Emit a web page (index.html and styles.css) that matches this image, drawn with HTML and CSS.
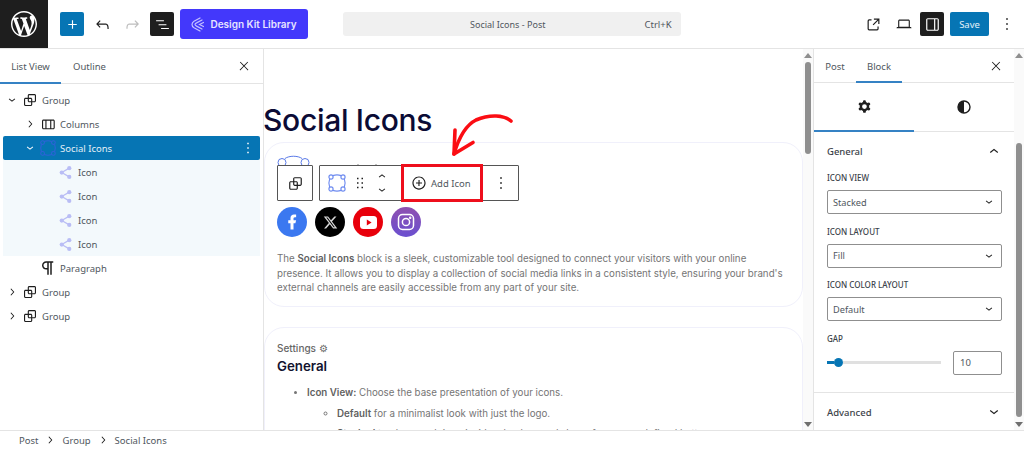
FILE: index.html
```html
<!DOCTYPE html>
<html lang="en">
<head>
  <meta charset="UTF-8" />
  <title>Social Icons - Post</title>
  <link rel="stylesheet" href="styles.css">
</head>
<body>

<!-- top bar -->
<header class="topbar">
  <div class="wp-logo">
    <svg width="26" height="26" viewBox="0 0 20 20" fill="#fff"><path d="M20 10c0-5.51-4.49-10-10-10C4.48 0 0 4.49 0 10c0 5.52 4.48 10 10 10 5.51 0 10-4.48 10-10zM7.78 15.37L4.37 6.22c.55-.02 1.17-.08 1.17-.08.5-.06.44-1.13-.06-1.11 0 0-1.45.11-2.37.11-.18 0-.37 0-.58-.01C4.12 2.69 6.87 1.11 10 1.11c2.33 0 4.45.87 6.05 2.34-.68-.11-1.65.39-1.65 1.58 0 .74.45 1.36.9 2.1.35.61.55 1.36.55 2.46 0 1.49-1.4 5-1.4 5l-3.03-8.37c.54-.02.82-.17.82-.17.5-.05.44-1.25-.06-1.22 0 0-1.44.12-2.38.12-.87 0-2.33-.12-2.33-.12-.5-.03-.56 1.2-.06 1.22l.92.08 1.26 3.41zM17.41 10c.24-.64.74-1.87.43-4.25.7 1.29 1.05 2.71 1.05 4.25 0 3.29-1.73 6.24-4.4 7.78.97-2.59 1.94-5.2 2.92-7.78zM6.1 18.09C3.12 16.65 1.11 13.53 1.11 10c0-1.3.23-2.48.72-3.59C3.25 10.3 4.67 14.2 6.1 18.09zm4.03-6.63l2.58 6.98c-.86.29-1.76.45-2.71.45-.79 0-1.57-.11-2.29-.33.81-2.38 1.62-4.74 2.42-7.1z"/></svg>
  </div>
  <div class="tools-left">
    <div class="btn btn-blue"><svg width="17" height="17" viewBox="0 0 24 24" fill="#fff"><path d="M18 11.2h-5.2V6h-1.6v5.2H6v1.6h5.2V18h1.6v-5.2H18z"/></svg></div>
    <div class="btn btn-plain"><svg width="19" height="19" viewBox="0 0 24 24" fill="#1e1e1e"><path d="M18.3 11.7c-.6-.6-1.4-.9-2.3-.9H6.7l2.9-3.3-1.1-1-4.5 5L8.5 16l1-1-2.7-2.7H16c.5 0 .9.2 1.3.5 1 1 1 3.4 1 4.5v.3h1.5v-.2c0-1.5 0-4.3-1.5-5.7z"/></svg></div>
    <div class="btn btn-plain"><svg width="19" height="19" viewBox="0 0 24 24" fill="#bdbdbd"><path d="M15.6 6.5l-1.1 1 2.9 3.3H8c-.9 0-1.7.3-2.3.9-1.4 1.5-1.4 4.2-1.4 5.6v.2h1.5v-.3c0-1.1 0-3.5 1-4.5.3-.3.7-.5 1.3-.5h9.2L14.5 15l1.1 1.1 4.6-4.6-4.6-5z"/></svg></div>
    <div class="btn btn-dark"><svg width="17" height="17" viewBox="0 0 24 24" fill="#fff"><path d="M3 6h11v1.5H3V6zm3.5 5.5h11V13h-11v-1.5zM21 17H10v1.5h11V17z"/></svg></div>
    <div class="kit-btn">
      <svg width="13" height="15" viewBox="0 0 13 15" fill="none" stroke="#c4c1ff" stroke-width="1.2" stroke-linecap="round"><path d="M9 1 3 4.2C1.3 5.2 1 6 1 7.5S1.3 9.8 3 10.8L9 14"/><path d="M11 3 5.6 5.9C4.4 6.5 4 6.900 4 7.500s.4 1 1.600 1.600L11 12"/><path d="M12.500 5.500 8.500 7.500l4 2"/></svg>
      Design Kit Library
    </div>
  </div>
  <div class="command">
    <span>Social Icons - Post</span>
    <span class="command-key">Ctrl+K</span>
  </div>
  <div class="tools-right">
    <div class="btn-small"><svg width="19" height="19" viewBox="0 0 24 24" fill="#1e1e1e"><path d="M19.5 4.5h-7V6h4.44l-5.97 5.97 1.06 1.06L18 7.06v4.44h1.5v-7Zm-13 1a2 2 0 0 0-2 2v10a2 2 0 0 0 2 2h10a2 2 0 0 0 2-2v-3H17v3a.5.5 0 0 1-.5.5h-10a.5.5 0 0 1-.5-.5v-10a.5.5 0 0 1 .5-.5h3V5.5h-3Z"/></svg></div>
    <div class="btn-small"><svg width="18" height="18" viewBox="0 0 24 24" fill="#1e1e1e"><path d="M20.5 16h-.7V8c0-1.1-.9-2-2-2H6.2C5.1 6 4.2 6.9 4.2 8v8h-.7c-.8 0-1.5.7-1.5 1.5h20c0-.8-.7-1.5-1.5-1.5zM5.700 8c0-.3.2-.5.5-.5h11.600c.3 0 .5.2.5.5v7.600H5.700V8z"/></svg></div>
    <div class="btn btn-dark sidebar-btn"><svg width="19" height="19" viewBox="0 0 24 24" fill="#fff"><path d="M18 4H6c-1.1 0-2 .9-2 2v12c0 1.1.9 2 2 2h12c1.1 0 2-.9 2-2V6c0-1.1-.9-2-2-2zm-4 14.500H6c-.3 0-.5-.2-.5-.5V6c0-.3.2-.5.5-.5h8v13zm4.500-.5c0 .3-.2.5-.5.5h-2.500v-13H18c.3 0 .5.2.5.5v12z"/></svg></div>
    <div class="save-btn">Save</div>
    <div class="more-btn"><svg width="20" height="20" viewBox="0 0 24 24" fill="#1e1e1e"><path d="M13 19h-2v-2h2v2zm0-6h-2v-2h2v2zm0-6h-2V5h2v2z"/></svg></div>
  </div>
</header>

<svg class="icon-defs" width="0" height="0">
  <defs>
    <path id="i-group" d="M18 4h-7c-1.1 0-2 .9-2 2v3H6c-1.1 0-2 .9-2 2v7c0 1.1.9 2 2 2h7c1.1 0 2-.9 2-2v-3h3c1.1 0 2-.9 2-2V6c0-1.1-.9-2-2-2zm-4.5 14c0 .3-.2.5-.5.5H6c-.3 0-.5-.2-.5-.5v-7c0-.3.2-.5.5-.5h3V13c0 1.1.9 2 2 2h2.5v3zm0-4.5H11c-.3 0-.5-.2-.5-.5v-2.5H13c.3 0 .5.2.5.5v2.5zm5-.5c0 .3-.2.5-.5.5h-3V11c0-1.1-.9-2-2-2h-2.5V6c0-.3.2-.5.5-.5h7c.3 0 .5.2.5.5v7z"/>
    <path id="i-right" d="M10.6 6L9.4 7l4.6 5-4.6 5 1.2 1 5.4-6z"/>
    <path id="i-down" d="M17.5 10.6L12 15l-5.5-4.4.9-1.2L12 13l4.5-3.6 1 1.2z"/>
    <path id="i-up" d="M6.5 13.4L12 9l5.5 4.4-.9 1.2L12 11l-4.5 3.6-1-1.2z"/>
    <path id="i-close" d="M13 11.8l6.1-6.3-1-1-6.1 6.2-6.1-6.2-1 1 6.1 6.3-6.5 6.7 1 1 6.5-6.6 6.5 6.6 1-1z"/>
    <path id="i-dots" d="M13 19h-2v-2h2v2zm0-6h-2v-2h2v2zm0-6h-2V5h2v2z"/>
    <g id="i-share"><circle cx="18" cy="5" r="3.4"/><circle cx="6" cy="12" r="3.4"/><circle cx="18" cy="19" r="3.4"/><path d="M6 12 18 5M6 12l12 7" stroke="currentColor" stroke-width="2"/></g>
    <g id="i-social" fill="none" stroke="currentColor" stroke-width="1.4"><path d="M7 3.200c3.200-1.200 6.800-1.200 10 0M20.800 7c1.200 3.200 1.200 6.800 0 10M17 20.800c-3.200 1.200-6.800 1.200-10 0M3.200 17c-1.200-3.200-1.200-6.800 0-10"/><circle cx="4.800" cy="4.800" r="2.500"/><circle cx="19.200" cy="4.800" r="2.500"/><circle cx="4.800" cy="19.200" r="2.500"/><circle cx="19.200" cy="19.200" r="2.500"/></g>
  </defs>
</svg>

<div class="main">

  <!-- list view -->
  <aside class="list-panel">
    <div class="tabs list-tabs">
      <div class="tab tab-active">List View</div>
      <div class="tab">Outline</div>
      <svg class="tab-close" width="14" height="14" viewBox="0 0 24 24" fill="#1e1e1e"><use href="#i-close"/></svg>
    </div>
    <div class="tree">
      <div class="row lv0"><svg class="chev" viewBox="0 0 24 24"><use href="#i-down"/></svg><svg class="row-icon" viewBox="0 0 24 24"><use href="#i-group"/></svg>Group</div>
      <div class="row lv1"><svg class="chev" viewBox="0 0 24 24"><use href="#i-right"/></svg><svg class="row-icon" viewBox="0 0 24 24"><path d="M19 6H6c-1.1 0-2 .9-2 2v9c0 1.1.9 2 2 2h13c1.1 0 2-.9 2-2V8c0-1.1-.9-2-2-2zm-4.1 1.5v10H10v-10h4.9zM5.5 17V8c0-.3.2-.5.5-.5h2.5v10H6c-.3 0-.5-.2-.5-.5zm14 0c0 .3-.2.5-.5.5h-2.6v-10H19c.3 0 .5.2.5.5v9z"/></svg>Columns</div>
      <div class="row lv1 row-selected"><svg class="chev" viewBox="0 0 24 24"><use href="#i-down"/></svg><svg class="row-icon social-blue" viewBox="0 0 24 24"><use href="#i-social"/></svg>Social Icons<svg class="row-dots" width="18" height="18" viewBox="0 0 24 24"><use href="#i-dots"/></svg></div>
      <div class="row lv2 row-child"><svg class="row-icon share" viewBox="0 0 24 24"><use href="#i-share"/></svg>Icon</div>
      <div class="row lv2 row-child"><svg class="row-icon share" viewBox="0 0 24 24"><use href="#i-share"/></svg>Icon</div>
      <div class="row lv2 row-child"><svg class="row-icon share" viewBox="0 0 24 24"><use href="#i-share"/></svg>Icon</div>
      <div class="row lv2 row-child"><svg class="row-icon share" viewBox="0 0 24 24"><use href="#i-share"/></svg>Icon</div>
      <div class="row lv1 no-chev"><svg class="row-icon" viewBox="0 0 24 24"><path d="M11 5v7H9.5C7.6 12 6 10.4 6 8.5S7.6 5 9.5 5H11zm8-2H9.5C6.5 3 4 5.5 4 8.5S6.5 14 9.5 14H11v7h2V5h2v16h2V5h2V3z"/></svg>Paragraph</div>
      <div class="row lv0"><svg class="chev" viewBox="0 0 24 24"><use href="#i-right"/></svg><svg class="row-icon" viewBox="0 0 24 24"><use href="#i-group"/></svg>Group</div>
      <div class="row lv0"><svg class="chev" viewBox="0 0 24 24"><use href="#i-right"/></svg><svg class="row-icon" viewBox="0 0 24 24"><use href="#i-group"/></svg>Group</div>
    </div>
  </aside>

  <!-- editor canvas -->
  <main class="canvas">
    <div class="canvas-page">
      <h1 class="post-title">Social Icons</h1>

      <section class="card card-social">
        <div class="social-list">
          <div class="social-circle sc-fb"><svg width="18" height="18" viewBox="0 0 24 24" fill="#fff"><path d="M14 13.5h2.5l1-4H14v-2c0-1.03 0-2 2-2h1.5V2.14c-.326-.043-1.557-.14-2.857-.14C11.928 2 10 3.657 10 6.7v2.8H7v4h3V22h4v-8.5z"/></svg></div>
          <div class="social-circle sc-x"><svg width="15" height="15" viewBox="0 0 24 24" fill="#d8d8d8"><path d="M18.244 2.25h3.308l-7.227 8.26 8.502 11.24H16.17l-5.214-6.817L4.99 21.75H1.68l7.73-8.835L1.254 2.25H8.08l4.713 6.231zm-1.161 17.52h1.833L7.084 4.126H5.117z"/></svg></div>
          <div class="social-circle sc-yt"><svg width="17" height="13" viewBox="0 0 17 13"><rect width="17" height="13" rx="3.5" fill="#fff"/><path d="M6.8 3.6v5.8l4.8-2.9z" fill="#e8000b"/></svg></div>
          <div class="social-circle sc-ig"><svg width="18" height="18" viewBox="0 0 18 18" fill="none" stroke="#fff" stroke-width="1.5"><rect x="1.5" y="1.5" width="15" height="15" rx="4"/><circle cx="9" cy="9" r="3.6"/><circle cx="13.2" cy="4.8" r=".5" fill="#fff"/></svg></div>
        </div>
        <p class="card-text">The <b>Social Icons</b> block is a sleek, customizable tool designed to connect your visitors with your online presence. It allows you to display a collection of social media links in a consistent style, ensuring your brand's external channels are easily accessible from any part of your site.</p>
      </section>

      <section class="card card-settings">
        <div class="settings-label">Settings ⚙</div>
        <h2 class="settings-title">General</h2>
        <ul class="outer-list">
          <li><b>Icon View:</b> Choose the base presentation of your icons.
            <ul class="inner-list">
              <li><b>Default</b> for a minimalist look with just the logo.</li>
              <li><b>Stacked</b> to place each icon inside a background shape for a more defined button.</li>
            </ul>
          </li>
        </ul>
      </section>

      <!-- block toolbar, sits over the card -->
      <svg class="ghost-icon" width="104" height="12" viewBox="0 0 104 12" fill="none" stroke="#5b7be8" stroke-width="1"><circle cx="5" cy="7.500" r="4"/><circle cx="28" cy="7.500" r="4"/><path d="M8 3.500c4-3 13-3 17 0"/><circle cx="81" cy="10.500" r="1" fill="#333" stroke="none"/><circle cx="99" cy="10.500" r="1" fill="#333" stroke="none"/></svg>
      <div class="block-toolbar">
        <div class="tb-group tb-single"><svg width="19" height="19" viewBox="0 0 24 24" fill="#1e1e1e"><use href="#i-group"/></svg></div>
        <div class="tb-group tb-main">
          <svg class="tb-social" width="20" height="20" viewBox="0 0 24 24"><use href="#i-social"/></svg>
          <svg class="tb-drag" width="18" height="18" viewBox="0 0 24 24" fill="#1e1e1e"><path d="M8 7h2V5H8v2zm0 6h2v-2H8v2zm0 6h2v-2H8v2zm6-14v2h2V5h-2zm0 8h2v-2h-2v2zm0 6h2v-2h-2v2z"/></svg>
          <div class="tb-mover">
            <svg width="18" height="18" viewBox="0 0 24 24" fill="#1e1e1e"><use href="#i-up"/></svg>
            <svg width="18" height="18" viewBox="0 0 24 24" fill="#1e1e1e"><use href="#i-down"/></svg>
          </div>
          <div class="tb-add">
            <svg width="18" height="18" viewBox="0 0 24 24" fill="#1e1e1e"><path d="M12 3.3c-4.8 0-8.8 3.9-8.8 8.8 0 4.8 3.9 8.8 8.8 8.8 4.8 0 8.8-3.9 8.8-8.8s-4-8.8-8.8-8.8zm0 16c-4 0-7.2-3.3-7.2-7.2C4.8 8 8 4.8 12 4.8s7.2 3.3 7.2 7.2c0 4-3.2 7.3-7.2 7.3zM12.8 8h-1.5v3.2H8v1.5h3.2V16h1.5v-3.2H16v-1.5h-3.2z"/></svg>
            Add Icon
          </div>
          <div class="tb-more"><svg width="20" height="20" viewBox="0 0 24 24" fill="#1e1e1e"><use href="#i-dots"/></svg></div>
        </div>
      </div>

      <!-- red annotation arrow -->
      <svg class="red-arrow" width="76" height="52" viewBox="0 0 76 52" fill="none" stroke="#fb0d13" stroke-width="3.6" stroke-linecap="round" stroke-linejoin="round"><path d="M67 12C60 6 46 5 32 11 22 16 15 28 10 45"/><path d="M11 21 10 45 29 33.500"/></svg>
    </div>
    <div class="scrollbar">
      <span class="arrow-up"></span>
      <div class="scroll-track"><div class="scroll-thumb canvas-thumb"></div></div>
      <span class="arrow-down"></span>
    </div>
  </main>

  <!-- settings sidebar -->
  <aside class="side-panel">
    <div class="side-content">
      <div class="tabs side-tabs">
        <div class="tab">Post</div>
        <div class="tab tab-active">Block</div>
        <svg class="tab-close" width="14" height="14" viewBox="0 0 24 24" fill="#1e1e1e"><use href="#i-close"/></svg>
      </div>
      <div class="style-tabs">
        <div class="style-tab style-active"><svg width="19" height="19" viewBox="0 0 24 24" fill="#1e1e1e" fill-rule="evenodd"><path d="M10.289 4.836A1 1 0 0 1 11.275 4h1.306a1 1 0 0 1 .986.836l.244 1.466c.788.26 1.503.679 2.108 1.218l1.393-.522a1 1 0 0 1 1.216.437l.653 1.13a1 1 0 0 1-.23 1.273l-1.148.944a6.025 6.025 0 0 1 0 2.435l1.149.946a1 1 0 0 1 .23 1.272l-.653 1.13a1 1 0 0 1-1.216.437l-1.394-.522c-.605.54-1.32.958-2.108 1.218l-.244 1.466a1 1 0 0 1-.986.836h-1.306a1 1 0 0 1-.986-.836l-.244-1.466a5.995 5.995 0 0 1-2.108-1.218l-1.394.522a1 1 0 0 1-1.217-.436l-.653-1.131a1 1 0 0 1 .23-1.272l1.149-.946a6.026 6.026 0 0 1 0-2.435l-1.148-.944a1 1 0 0 1-.23-1.272l.653-1.131a1 1 0 0 1 1.217-.437l1.393.522a5.994 5.994 0 0 1 2.108-1.218l.244-1.466ZM14.929 12a3 3 0 1 1-6 0 3 3 0 0 1 6 0Z"/></svg></div>
        <div class="style-tab"><svg width="14" height="14" viewBox="0 0 14 14"><circle cx="7" cy="7" r="6" fill="none" stroke="#1e1e1e" stroke-width="1.4"/><path d="M7 1a6 6 0 0 0 0 12z" fill="#1e1e1e"/></svg></div>
      </div>
      <section class="panel-body">
        <div class="panel-head">General<svg width="18" height="18" viewBox="0 0 24 24" fill="#1e1e1e"><use href="#i-up"/></svg></div>
        <label class="field-label">ICON VIEW</label>
        <div class="select">Stacked<svg width="14" height="14" viewBox="0 0 24 24" fill="#1e1e1e"><use href="#i-down"/></svg></div>
        <label class="field-label">ICON LAYOUT</label>
        <div class="select">Fill<svg width="14" height="14" viewBox="0 0 24 24" fill="#1e1e1e"><use href="#i-down"/></svg></div>
        <label class="field-label">ICON COLOR LAYOUT</label>
        <div class="select">Default<svg width="14" height="14" viewBox="0 0 24 24" fill="#1e1e1e"><use href="#i-down"/></svg></div>
        <label class="field-label">GAP</label>
        <div class="gap-row">
          <div class="slider">
            <span class="slider-fill"></span>
            <span class="slider-thumb"></span>
            <span class="slider-rest"></span>
          </div>
          <div class="gap-input">10</div>
        </div>
      </section>
      <div class="panel-head panel-closed">Advanced<svg width="18" height="18" viewBox="0 0 24 24" fill="#1e1e1e"><use href="#i-down"/></svg></div>
    </div>
    <div class="scrollbar">
      <span class="arrow-up"></span>
      <div class="scroll-track"><div class="scroll-thumb side-thumb"></div></div>
      <span class="arrow-down"></span>
    </div>
  </aside>
</div>

<!-- breadcrumb -->
<footer class="crumbs">
  <span>Post</span>
  <svg width="14" height="14" viewBox="0 0 24 24" fill="#1e1e1e"><use href="#i-right"/></svg>
  <span>Group</span>
  <svg width="14" height="14" viewBox="0 0 24 24" fill="#1e1e1e"><use href="#i-right"/></svg>
  <span>Social Icons</span>
</footer>

</body>
</html>
```

FILE: styles.css
```css
* {
  box-sizing: border-box;
}

body {
  margin: 0;
  height: 449px;
  overflow: hidden;
  display: flex;
  flex-direction: column;
  background: #fff;
  color: #50575e;
  font-family: "Noto Sans", sans-serif;
  font-size: 9.5px;
}

.icon-defs {
  position: absolute;
}

/* top bar */
.topbar {
  flex: none;
  height: 49px;
  display: flex;
  align-items: center;
  border-bottom: 1px solid #e4e4e4;
}

.wp-logo {
  width: 48px;
  height: 48px;
  background: #1e1e1e;
  display: flex;
  align-items: center;
  justify-content: center;
}

.tools-left {
  display: flex;
  align-items: center;
  margin-left: 12px;
  width: 283px;
}

.btn {
  width: 24px;
  height: 24px;
  border-radius: 2px;
  display: flex;
  align-items: center;
  justify-content: center;
}

.btn-blue {
  background: #0675b4;
}

.btn-plain {
  margin-left: 6px;
}

.btn-dark {
  background: #1e1e1e;
  margin-left: 6px;
}

.kit-btn {
  height: 30px;
  width: 128px;
  margin-left: 6px;
  border-radius: 3px;
  background: #4338fb;
  color: #e6e4ff;
  font-family: "Inter", sans-serif;
  font-size: 10px;
  font-weight: 600;
  display: flex;
  align-items: center;
  justify-content: center;
  gap: 6px;
}

.command {
  width: 338px;
  height: 24px;
  background: #f0f0f0;
  border-radius: 3px;
  display: flex;
  align-items: center;
  padding-left: 127px;
  font-size: 9px;
}

.command-key {
  margin-left: 99px;
  font-size: 9.5px;
}

.tools-right {
  flex: 1;
  display: flex;
  align-items: center;
  padding-left: 180px;
}

.btn-small {
  width: 24px;
  height: 24px;
  display: flex;
  align-items: center;
  justify-content: center;
  margin-right: 7px;
}

.sidebar-btn {
  margin-left: -3px;
}

.save-btn {
  width: 39px;
  height: 24px;
  margin-left: 6px;
  background: #0675b4;
  border-radius: 2px;
  color: #e5f1f8;
  font-size: 9.5px;
  display: flex;
  align-items: center;
  justify-content: center;
}

.more-btn {
  margin-left: 8px;
  display: flex;
}

.main {
  flex: 1;
  display: flex;
  min-height: 0;
}

/* tabs */
.tabs {
  height: 35px;
  display: flex;
  border-bottom: 1px solid #e4e4e4;
  align-items: stretch;
}

.tab {
  display: flex;
  align-items: center;
  justify-content: center;
  margin-bottom: -1px;
  padding-top: 2px;
  border-bottom: 2px solid transparent;
}

.tab-active {
  border-bottom-color: #3582c4;
}

.tab-close {
  margin: auto 0 auto auto;
}

.list-panel {
  flex: none;
  width: 264px;
  border-right: 1px solid #e4e4e4;
}

.list-tabs .tab {
  width: 61px;
}

.list-tabs .tab + .tab {
  width: 57px;
}

.list-tabs .tab-close {
  margin-right: 12px;
}

.tree {
  padding: 4px 3px 0;
}

.row {
  height: 24px;
  display: flex;
  align-items: center;
}

.chev {
  width: 14px;
  height: 14px;
  fill: #1e1e1e;
  flex: none;
  margin-right: 2px;
}

.row-icon {
  width: 18px;
  height: 18px;
  flex: none;
  fill: #1e1e1e;
  margin-right: 3px;
}

.lv0 {
  padding-left: 2px;
}

.lv1 {
  padding-left: 20px;
}

.lv2 {
  padding-left: 55px;
}

.no-chev {
  padding-left: 36px;
}

.row-selected {
  background: #0675b4;
  color: #e4f0f7;
  border-radius: 2px;
}

.row-selected .chev {
  fill: #fff;
}

.social-blue {
  color: #2f62d8;
}

.row-dots {
  margin-left: auto;
  margin-right: 3px;
  fill: #fff;
}

.row-child {
  background: #f3f9fc;
}

.share {
  fill: #b9bdf5;
  color: #b9bdf5;
  width: 15px;
  height: 15px;
  margin-right: 5px;
}

/* canvas */
.canvas {
  flex: 1;
  display: flex;
  min-width: 0;
  border-right: 1px solid #e4e4e4;
}

.canvas-page {
  flex: 1;
  min-width: 0;
  position: relative;
  overflow: hidden;
  font-family: "Inter", sans-serif;
  padding-top: 52px;
}

.post-title {
  margin: 0 0 0 -1px;
  font-size: 30px;
  line-height: 38px;
  font-weight: 500;
  letter-spacing: -0.3px;
  color: #0b0b35;
}

.card {
  border: 1px solid #f0f0fb;
  border-radius: 20px;
  padding: 0 12px;
}

.card-social {
  margin-top: 3px;
  height: 165px;
  padding-top: 64px;
}

.card-settings {
  margin-top: 20px;
  height: 160px;
  padding-top: 13px;
}

.social-list {
  display: flex;
  gap: 8px;
}

.social-circle {
  width: 30px;
  height: 30px;
  border-radius: 50%;
  display: flex;
  align-items: center;
  justify-content: center;
}

.sc-fb {
  background: #3b78f0;
}

.sc-x {
  background: #000;
}

.sc-yt {
  background: #e8000b;
}

.sc-ig {
  background: linear-gradient(180deg, #8f50b0, #6a4fd0);
}

.card-text {
  margin: 15px 0 0;
  font-size: 9.75px;
  line-height: 14.6px;
  color: #757575;
}

.card-text b,
.card-settings b {
  color: #5f5f5f;
  font-weight: 600;
}

.settings-label {
  font-size: 10px;
  line-height: 14px;
  color: #666;
  font-weight: 500;
}

.settings-title {
  margin: 2px 0 0;
  font-size: 13.3px;
  line-height: 18px;
  font-weight: 600;
  color: #13132f;
}

.outer-list {
  margin: 10.5px 0 0;
  padding-left: 30px;
  font-size: 9.75px;
  line-height: 14px;
  color: #757575;
}

.inner-list {
  margin: 7px 0 0;
  padding-left: 30px;
  list-style: circle;
}

.inner-list li {
  margin-bottom: 6px;
}

.ghost-icon {
  position: absolute;
  left: 13px;
  top: 106px;
}

.block-toolbar {
  position: absolute;
  left: 13px;
  top: 116px;
  display: flex;
  gap: 6px;
  color: #50575e;
}

.tb-group {
  height: 36px;
  background: #fff;
  border: 1px solid #555;
  border-radius: 1px;
  display: flex;
  align-items: center;
  justify-content: center;
}

.tb-single {
  width: 36px;
}

.tb-main {
  width: 200px;
  justify-content: flex-start;
}

.tb-social {
  color: #6f8cf0;
  margin-left: 7px;
}

.tb-drag {
  margin-left: 4px;
}

.tb-mover {
  display: flex;
  flex-direction: column;
  margin-left: 4px;
}

.tb-mover svg {
  height: 14px;
}

.tb-add {
  width: 82px;
  height: 38px;
  margin: -1px 0 -1px 10px;
  border: 3px solid #ee0f1c;
  display: flex;
  align-items: center;
  padding-left: 6px;
  gap: 3px;
  font-family: "Noto Sans", sans-serif;
  font-size: 9.5px;
}

.tb-more {
  flex: 1;
  display: flex;
  justify-content: center;
}

.red-arrow {
  position: absolute;
  left: 180px;
  top: 60px;
}

/* scrollbars */
.scrollbar {
  flex: none;
  width: 10px;
  background: #fafafa;
  display: flex;
  flex-direction: column;
  align-items: center;
}

.scroll-track {
  flex: 1;
  width: 100%;
  padding: 0 2px;
}

.scroll-thumb {
  background: #8f8f8f;
  border-radius: 4px;
}

.canvas-thumb {
  height: 92px;
  margin-top: 1px;
}

.side-thumb {
  height: 274px;
  margin-top: 82px;
}

.arrow-up,
.arrow-down {
  flex: none;
  width: 0;
  height: 0;
  border-left: 4px solid transparent;
  border-right: 4px solid transparent;
}

.arrow-up {
  border-bottom: 5px solid #8f8f8f;
  margin: 4px 0 3px;
}

.arrow-down {
  border-top: 5px solid #6f6f6f;
  margin: 3px 0;
}

/* settings sidebar */
.side-panel {
  flex: none;
  width: 210px;
  display: flex;
}

.side-content {
  flex: 1;
  min-width: 0;
}

.side-tabs {
  height: 34px;
}

.side-tabs .tab {
  width: 42px;
}

.side-tabs .tab-active {
  width: 46px;
}

.side-tabs .tab-close {
  margin-right: 11px;
}

.style-tabs {
  height: 49px;
  display: flex;
  border-bottom: 1px solid #e4e4e4;
}

.style-tab {
  flex: 1;
  display: flex;
  align-items: center;
  justify-content: center;
  margin-bottom: -1px;
  border-bottom: 2px solid transparent;
}

.style-active {
  border-bottom-color: #3582c4;
}

.panel-body {
  height: 261px;
  border-bottom: 1px solid #e4e4e4;
  padding: 0 12px 0 13px;
}

.panel-head {
  height: 38px;
  display: flex;
  align-items: center;
  justify-content: space-between;
  font-size: 9.5px;
  font-weight: 500;
  color: #3c434a;
}

.panel-head svg {
  margin-right: -1px;
}

.panel-closed {
  padding: 0 12px 0 13px;
}

.field-label {
  display: block;
  height: 20px;
  line-height: 16px;
  font-size: 8px;
  font-weight: 500;
  color: #3c434a;
}

.select {
  height: 24px;
  margin-bottom: 9.5px;
  border: 1px solid #8f8f8f;
  border-radius: 2px;
  display: flex;
  align-items: center;
  justify-content: space-between;
  padding: 0 5px;
  font-size: 9.2px;
  color: #50575e;
}

.gap-row {
  display: flex;
  align-items: center;
  gap: 12px;
}

.slider {
  width: 114px;
  display: flex;
  align-items: center;
}

.slider-fill {
  width: 6.5px;
  height: 3px;
  background: #0675b4;
}

.slider-thumb {
  width: 9px;
  height: 9px;
  border-radius: 50%;
  background: #0675b4;
}

.slider-rest {
  flex: 1;
  height: 3px;
  background: #e0e0e0;
}

.gap-input {
  width: 49px;
  height: 24px;
  border: 1px solid #8f8f8f;
  border-radius: 2px;
  display: flex;
  align-items: center;
  padding-left: 6px;
}

/* breadcrumb */
.crumbs {
  flex: none;
  height: 19px;
  border-top: 1px solid #e4e4e4;
  display: flex;
  align-items: center;
  padding-left: 19px;
  gap: 5px;
}
```
